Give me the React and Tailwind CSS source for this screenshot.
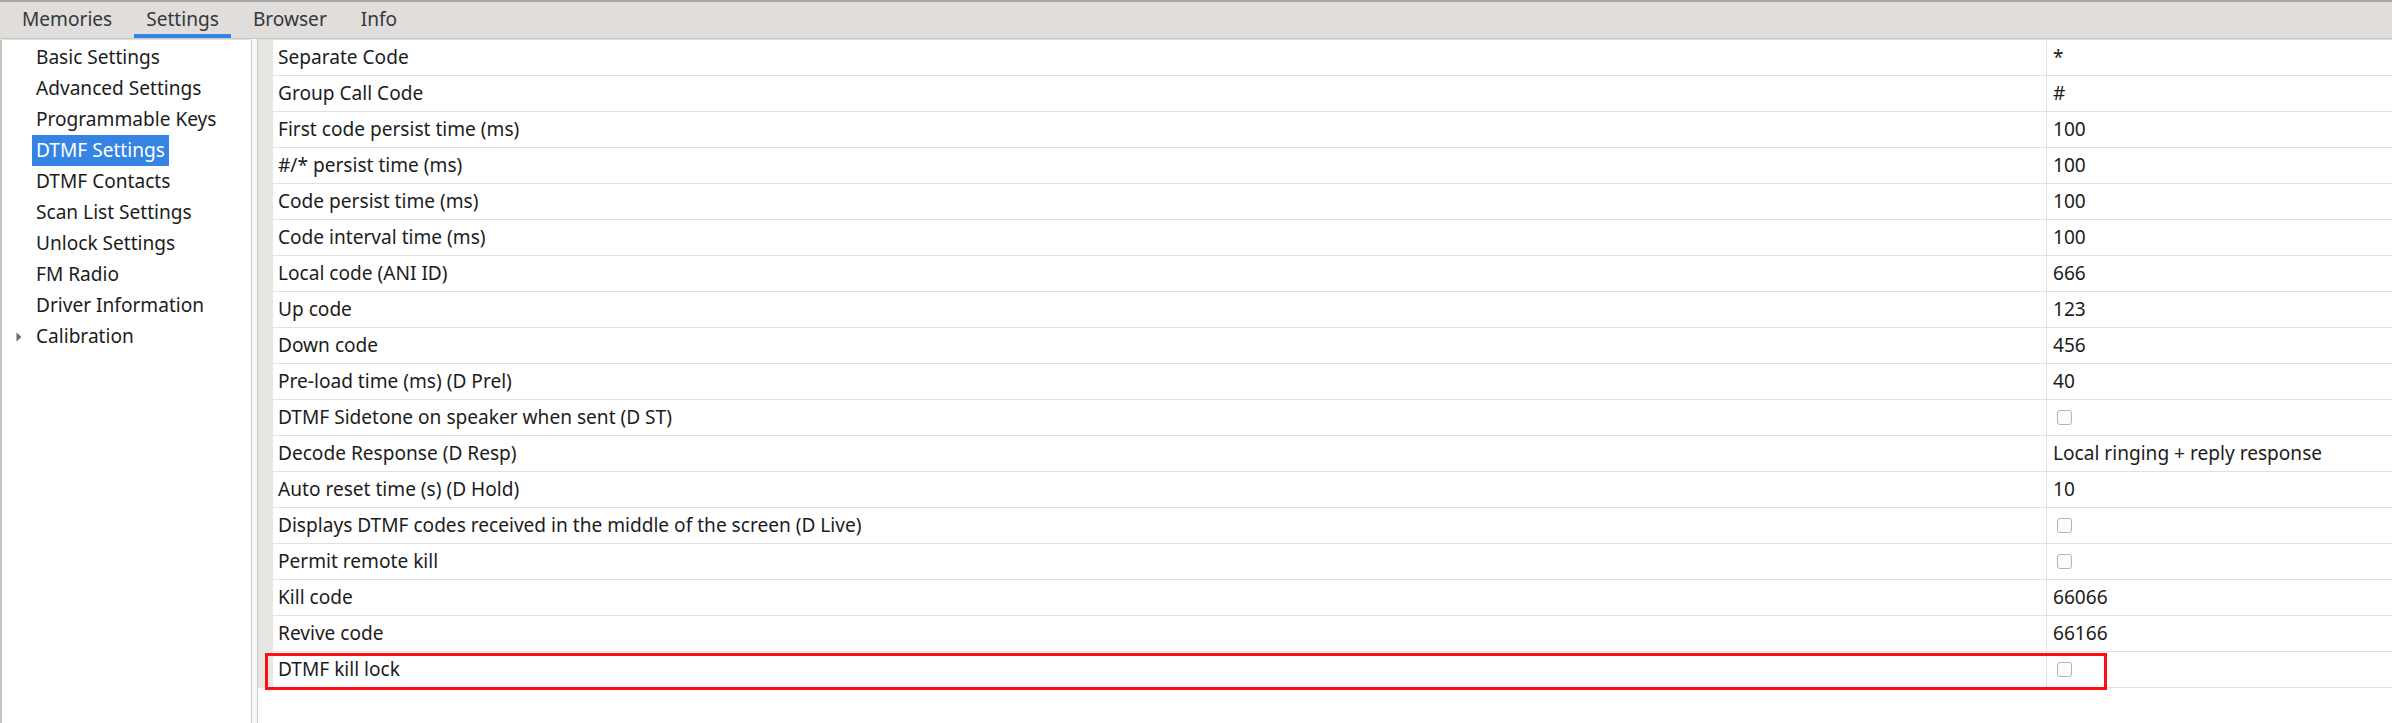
import React from "react";

const tree = [
  "Basic Settings",
  "Advanced Settings",
  "Programmable Keys",
  "DTMF Settings",
  "DTMF Contacts",
  "Scan List Settings",
  "Unlock Settings",
  "FM Radio",
  "Driver Information",
  "Calibration",
];

const rows = [
  ["Separate Code", "*"],
  ["Group Call Code", "#"],
  ["First code persist time (ms)", "100"],
  ["#/* persist time (ms)", "100"],
  ["Code persist time (ms)", "100"],
  ["Code interval time (ms)", "100"],
  ["Local code (ANI ID)", "666"],
  ["Up code", "123"],
  ["Down code", "456"],
  ["Pre-load time (ms) (D Prel)", "40"],
  ["DTMF Sidetone on speaker when sent (D ST)", null],
  ["Decode Response (D Resp)", "Local ringing + reply response"],
  ["Auto reset time (s) (D Hold)", "10"],
  ["Displays DTMF codes received in the middle of the screen (D Live)", null],
  ["Permit remote kill", null],
  ["Kill code", "66066"],
  ["Revive code", "66166"],
  ["DTMF kill lock", null],
];

function Checkbox() {
  return (
    <div className="w-[15px] h-[15px] rounded-[3px] border border-[#b8b2ac] bg-[#fcfcfc] ml-[4px]" />
  );
}

export default function App() {
  return (
    <div
      className="w-[2392px] h-[723px] flex flex-col bg-[#fafafa] text-[19.1px] text-[#1c1c1c] overflow-hidden"
      style={{ fontFamily: '"Noto Sans", "Open Sans", sans-serif' }}
    >
      {/* Tab bar */}
      <div className="h-[39px] shrink-0 bg-[#e0dddb] border-t-2 border-[#a8a6a4] border-b border-b-[#c9c5c1] flex items-stretch pl-[10px] gap-[10px] text-[#33383c]">
        {["Memories", "Settings", "Browser", "Info"].map((t) => (
          <div
            key={t}
            className={
              "px-[12px] flex items-center leading-none pt-[3px] border-b-[4px] " +
              (t === "Settings" ? "border-[#3584e4]" : "border-transparent")
            }
          >
            {t}
          </div>
        ))}
      </div>

      {/* Body */}
      <div className="flex-1 flex min-h-0">
        {/* Tree panel */}
        <div className="w-[252px] shrink-0 bg-white border-l-2 border-l-[#c6c2be] border-r border-r-[#cfcbc7] border-t border-t-[#e2dfdc] rounded-tl-[3px] rounded-tr-[3px] pt-[2px]">
          {tree.map((t) => (
            <div key={t} className="h-[31px] flex items-center relative pl-[30px]">
              {t === "Calibration" && (
                <svg
                  className="absolute left-[14px] top-[11px]"
                  width="6"
                  height="10"
                  viewBox="0 0 6 10"
                >
                  <path d="M0.5 0.5 L5.5 5 L0.5 9.5 Z" fill="#6b6b6b" />
                </svg>
              )}
              <span
                className={
                  "px-[4px] h-[31px] flex items-center " +
                  (t === "DTMF Settings" ? "bg-[#3584e4] text-white" : "")
                }
              >
                {t}
              </span>
            </div>
          ))}
        </div>

        <div className="w-[5px] shrink-0 bg-[#f7f7f7]" />

        {/* Table panel */}
        <div className="flex-1 bg-white border-l border-[#cfcbc7] border-t border-t-[#e2dfdc] flex flex-col">
          {rows.map(([label, value], i) => (
            <div key={label} className="h-[36px] flex relative">
              <div className="w-[15px] shrink-0 bg-[#e6e6e5]" />
              <div className="flex-1 border-b border-[#e1e1e1] flex items-center pl-[5px]">
                {label}
              </div>
              <div className="w-[346px] shrink-0 border-b border-l border-[#e1e1e1] flex items-center pl-[6px]">
                {value === null ? <Checkbox /> : value}
              </div>
              {i === rows.length - 1 && (
                <div className="absolute left-[7px] top-[1px] w-[1842px] h-[37px] border-[3px] border-[#ff1010] pointer-events-none" />
              )}
            </div>
          ))}
        </div>
      </div>
    </div>
  );
}
